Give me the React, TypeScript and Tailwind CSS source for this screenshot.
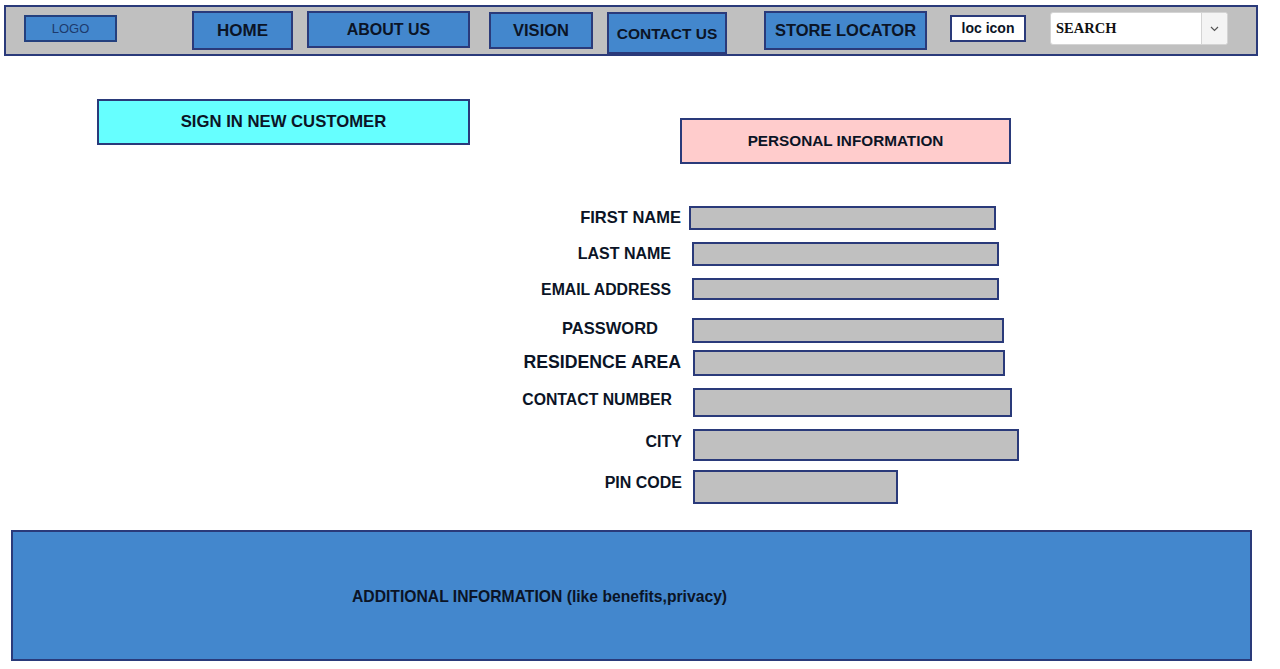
import React from "react";

const NAVY = "border-[#2a3a7a]";

const rows = [
  { label: "FIRST NAME", row: "mt-[42px]", lab: "pr-[8px] text-[16.5px] -mt-[2px]", inp: "w-[307px] h-[24px]" },
  { label: "LAST NAME", row: "mt-[12px]", lab: "pr-[18px] text-[16px]", inp: "ml-[3px] w-[307px] h-[24px]" },
  { label: "EMAIL ADDRESS", row: "mt-[12px]", lab: "pr-[18px] text-[15.8px] mt-[2px]", inp: "ml-[3px] w-[307px] h-[22px]" },
  { label: "PASSWORD", row: "mt-[18px]", lab: "pr-[31px] text-[16.5px] -mt-[4px]", inp: "ml-[3px] w-[312px] h-[25px]" },
  { label: "RESIDENCE AREA", row: "mt-[7px]", lab: "pr-[8px] text-[17.7px]", inp: "ml-[4px] w-[312px] h-[26px]" },
  { label: "CONTACT NUMBER", row: "mt-[12px]", lab: "pr-[17px] text-[15.8px] -mt-[6px]", inp: "ml-[4px] w-[319px] h-[29px]" },
  { label: "CITY", row: "mt-[12px]", lab: "pr-[7px] text-[16px] -mt-[6px]", inp: "ml-[4px] w-[326px] h-[32px]" },
  { label: "PIN CODE", row: "mt-[9px]", lab: "pr-[7px] text-[16px] -mt-[8px]", inp: "ml-[4px] w-[205px] h-[34px]" },
];

export default function App() {
  return (
    <div
      className="w-[1280px] h-[669px] bg-white overflow-hidden text-[#0b1426]"
      style={{ fontFamily: '"Liberation Sans", Arial, sans-serif' }}
    >
      {/* NAV */}
      <div className={`mt-[5px] ml-[4px] w-[1254px] h-[51px] bg-[#c0c0c0] border-2 ${NAVY} flex items-start`}>
        <div className="ml-[18px] mt-[8px] w-[93px] h-[27px] bg-[#4387cd] border-2 border-[#24407e] flex items-center justify-center text-[13px] text-[#1d3a6c]">
          LOGO
        </div>
        <div className={`ml-[75px] mt-[4px] w-[101px] h-[39px] bg-[#4387cd] border-2 ${NAVY} flex items-center justify-center text-[17px] font-bold`}>
          HOME
        </div>
        <div className={`ml-[14px] mt-[4px] w-[163px] h-[37px] bg-[#4387cd] border-2 ${NAVY} flex items-center justify-center text-[16px] font-bold`}>
          ABOUT US
        </div>
        <div className={`ml-[19px] mt-[5px] w-[104px] h-[37px] bg-[#4387cd] border-2 ${NAVY} flex items-center justify-center text-[16.5px] font-bold`}>
          VISION
        </div>
        <div className={`ml-[14px] mt-[5px] w-[120px] h-[42px] bg-[#4387cd] border-2 ${NAVY} flex items-center justify-center text-[15.5px] font-bold pt-[1px]`}>
          CONTACT US
        </div>
        <div className={`ml-[37px] mt-[4px] w-[163px] h-[39px] bg-[#4387cd] border-2 ${NAVY} flex items-center justify-center text-[16.5px] font-bold`}>
          STORE LOCATOR
        </div>
        <div className={`ml-[23px] mt-[8px] w-[76px] h-[27px] bg-white border-2 ${NAVY} flex items-center justify-center text-[14px] font-bold`}>
          loc icon
        </div>
        <div className="ml-[24px] mt-[5px] w-[178px] h-[33px] bg-white border border-[#d4d4d4] rounded-[3px] flex">
          <div
            className="flex-1 flex items-center pl-[5px] text-[14.5px] font-bold text-[#111]"
            style={{ fontFamily: '"Liberation Serif", "Times New Roman", serif' }}
          >
            SEARCH
          </div>
          <div className="w-[26px] border-l border-[#d4d4d4] bg-[#f4f4f4] flex items-center justify-center rounded-r-[3px]">
            <svg width="9" height="6" viewBox="0 0 9 6">
              <path d="M1 1 L4.5 4.5 L8 1" fill="none" stroke="#555" strokeWidth="1.2" />
            </svg>
          </div>
        </div>
      </div>

      {/* BODY */}
      <div className="flex items-start">
        <div className={`ml-[97px] mt-[43px] w-[373px] h-[46px] bg-[#66ffff] border-2 ${NAVY} flex items-center justify-center text-[16.7px] font-bold`}>
          SIGN IN NEW CUSTOMER
        </div>
        <div className={`ml-[210px] mt-[62px] w-[331px] h-[46px] bg-[#ffcccc] border-2 ${NAVY} flex items-center justify-center text-[15.3px] font-bold`}>
          PERSONAL INFORMATION
        </div>
      </div>

      <div className="ml-[500px] flex flex-col">
        {rows.map((r) => (
          <div key={r.label} className={`flex items-center ${r.row}`}>
            <div className={`w-[189px] text-right font-bold whitespace-nowrap leading-none ${r.lab}`}>{r.label}</div>
            <div className={`bg-[#c0c0c0] border-2 ${NAVY} ${r.inp}`} />
          </div>
        ))}
      </div>

      {/* FOOTER */}
      <div className={`mt-[26px] ml-[11px] w-[1241px] h-[131px] bg-[#4387cd] border-2 ${NAVY} flex items-center`}>
        <div className="ml-[339px] mt-[2px] text-[15.7px] font-bold">
          ADDITIONAL INFORMATION (like benefits,privacy)
        </div>
      </div>
    </div>
  );
}
